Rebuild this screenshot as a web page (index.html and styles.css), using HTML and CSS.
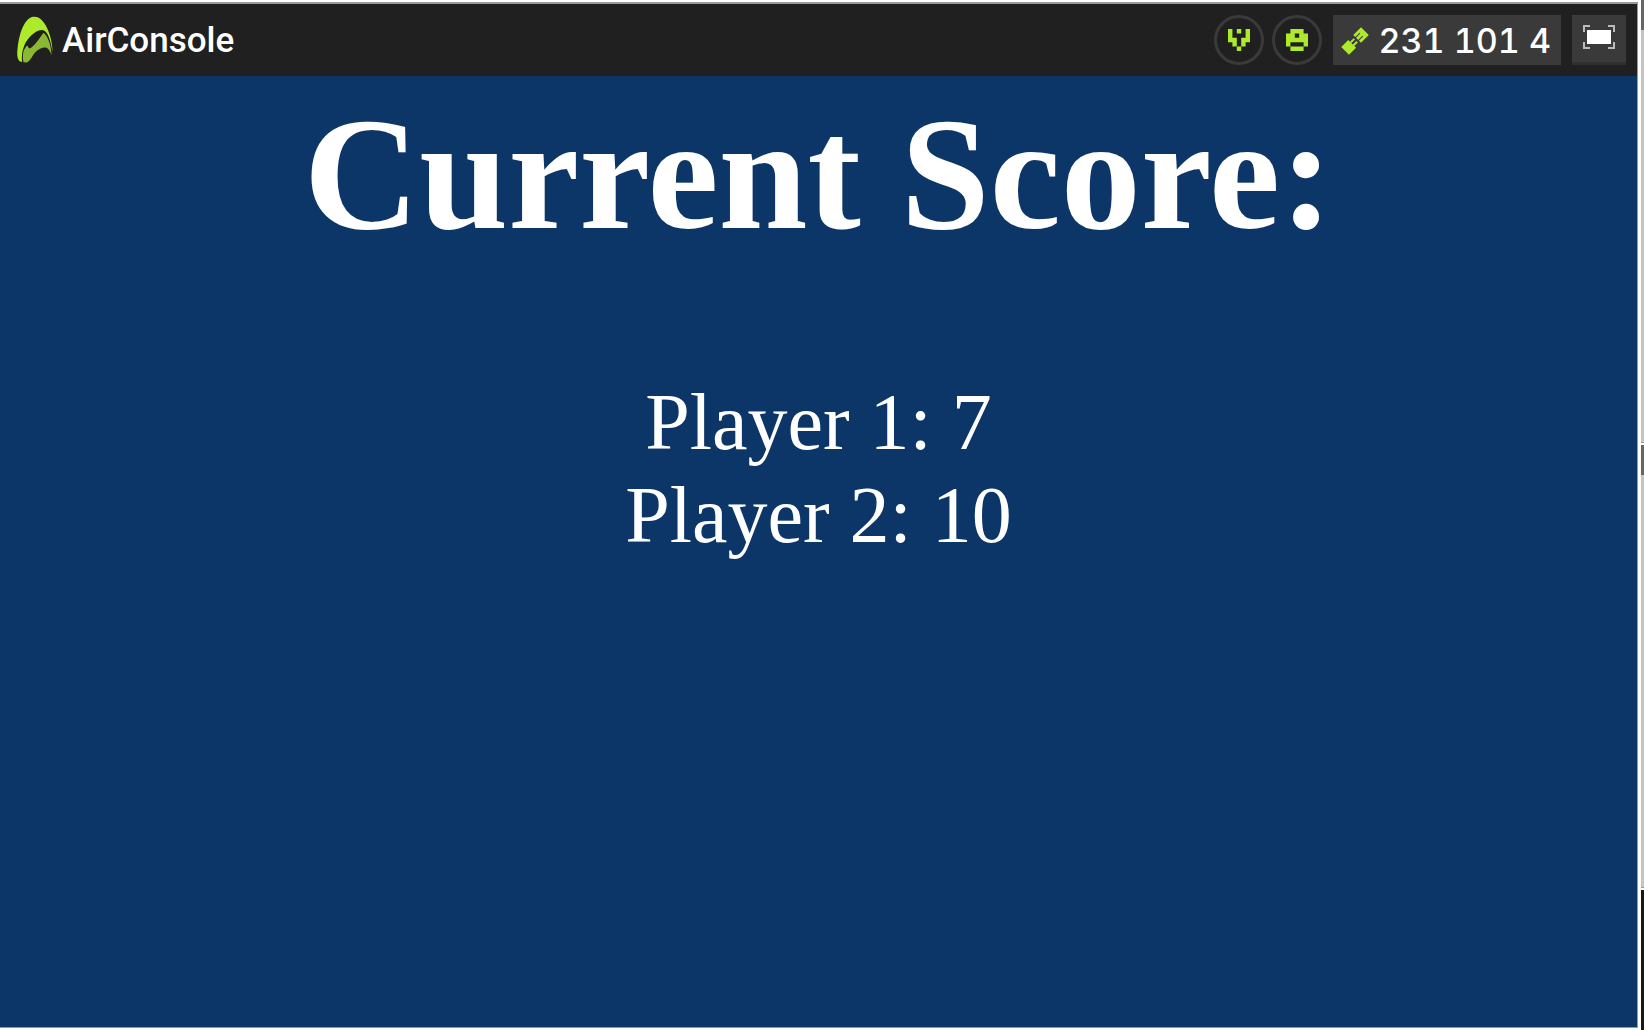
FILE: index.html
```html
<!DOCTYPE html>
<html lang="en">
<head>
<meta charset="utf-8">
<title>AirConsole</title>
<link rel="stylesheet" href="styles.css">
</head>
<body>
<div class="window">
  <header class="topbar">
    <a class="brand" href="#">
      <svg class="brand-mark" width="38" height="48" viewBox="0 0 38 48" aria-hidden="true">
        <path fill="#aeea2c" d="M4 45.500C1 43 1 38 1.500 33C2.500 23 5 13 9 7C12 2.500 15 .7 18.500 .7C23 .7 26.500 4 29.500 9C33 15 36.500 25 36.500 36C35 26 32 14.500 26.500 14C19 14 11.500 22 8.500 29C6 35 5.500 40 6 46Z"/>
        <path fill="#8ab833" d="M7.500 46.300C6.500 42 6.500 35 9.500 31.500C10.500 29.500 11.500 29 12 30.500C12.500 32.500 14 33 16 31C21 27 24 21 27.500 16.700C32 20 35.500 30 35.500 39.500C34 34 31.500 31.500 29 31.500C26 31.500 22 33.500 19.500 36C16.500 39 14 46 10.500 46.500Z"/>
      </svg>
      <span class="brand-name">AirConsole</span>
    </a>
    <div class="tools">
      <button class="round" aria-label="Player one">
        <svg width="22" height="22" viewBox="0 0 10 10" aria-hidden="true"><path fill="#aeea2c" d="M0 0h2v4h2v4h-2v-2h-2zM8 0h2v6h-2v2h-2v-4h2zM4 0h2v2h-2zM4 8h2v2h-2z"/></svg>
      </button>
      <button class="round" aria-label="Player two">
        <svg width="22" height="22" viewBox="0 0 10 10" aria-hidden="true"><path fill="#aeea2c" fill-rule="evenodd" d="M2 0h6v2h2v6h-2v-2h-6v2h-2v-6h2zM4 2v2h2v-2zM2 8h6v2h-6z"/></svg>
      </button>
      <div class="code">
        <svg width="28" height="28" viewBox="0 0 28 28" aria-hidden="true">
          <g transform="rotate(-45 14 14)" fill="#aeea2c"><path d="M0 8.500h10v11h-10z"/><path d="M10 11h5v2h-5zM10 15h5v2h-5z"/><path d="M17 8.500h11v11h-11v-3h6v-1h-6v-3h6v-1h-6z"/></g>
        </svg>
        <span>231 101 4</span>
      </div>
      <button class="full" aria-label="Full screen">
        <svg width="34" height="26" viewBox="0 0 34 26" aria-hidden="true"><path fill="none" stroke="#bbb" stroke-width="2" d="M2 8V2H8M26 2H32V8M32 18V24H26M8 24H2V18"/><path fill="#fff" d="M5 6h24v14h-24z"/></svg>
      </button>
    </div>
  </header>
  <main class="screen">
    <h1>Current Score:</h1>
    <p>Player 1: 7</p>
    <p>Player 2: 10</p>
  </main>
</div>
<div class="edge" aria-hidden="true"><i class="mark"></i><i class="track"></i><i class="mark"></i><i class="track"></i><i class="dark"></i></div>
</body>
</html>
```
FILE: styles.css
```css
* { box-sizing: border-box; }
body {
  margin: 0;
  min-height: 100vh;
  display: flex;
  background: #fff;
  color: #fff;
}
.window {
  flex: 1;
  display: flex;
  flex-direction: column;
  margin: 2px 3px 2px 0;
  border: solid #9a9a9a;
  border-width: 2px 1px 1px 0;
}
.topbar {
  height: 72px;
  padding: 0 11px 0 16px;
  display: flex;
  align-items: center;
  justify-content: space-between;
  background: #202020;
}
.brand {
  display: flex;
  align-items: center;
  gap: 8px;
  color: #fff;
  text-decoration: none;
}
.brand-name { padding-top: 2px; font: 500 35px/48px Roboto, sans-serif; }
.tools { display: flex; align-items: center; }
.round {
  width: 50px;
  height: 50px;
  margin-right: 8px;
  padding: 0;
  display: grid;
  place-items: center;
  background: none;
  border: 3px solid #3a3a3a;
  border-radius: 50%;
}
.code {
  height: 50px;
  width: 228px;
  margin: 0 11px 0 3px;
  padding: 2px 10px 0 8px;
  display: flex;
  align-items: center;
  justify-content: space-between;
  background: #3a3a3a;
  font: 500 34px/48px Inter, sans-serif;
  font-variant-numeric: tabular-nums;
}
.full {
  width: 54px;
  height: 50px;
  padding: 0 0 4px;
  display: grid;
  place-items: center;
  background: #3a3a3a;
  border: 0;
  border-bottom: 3px solid #303030;
}
.screen {
  flex: 1;
  background: #0d3668;
  text-align: center;
  font-family: "Liberation Serif", serif;
}
h1 { margin: 0; padding: 6px 0 110px; font-size: 160px; line-height: 184px; }
p { margin: 0; font-size: 80px; line-height: 93px; }
.edge { width: 3px; display: flex; flex-direction: column; }
.mark { height: 30px; background: #666; }
.track { flex: 1; margin-bottom: 2px; border-bottom: 1px solid #999; background: #c4c4c4; }
.dark { height: 140px; background: #181818; }
```
